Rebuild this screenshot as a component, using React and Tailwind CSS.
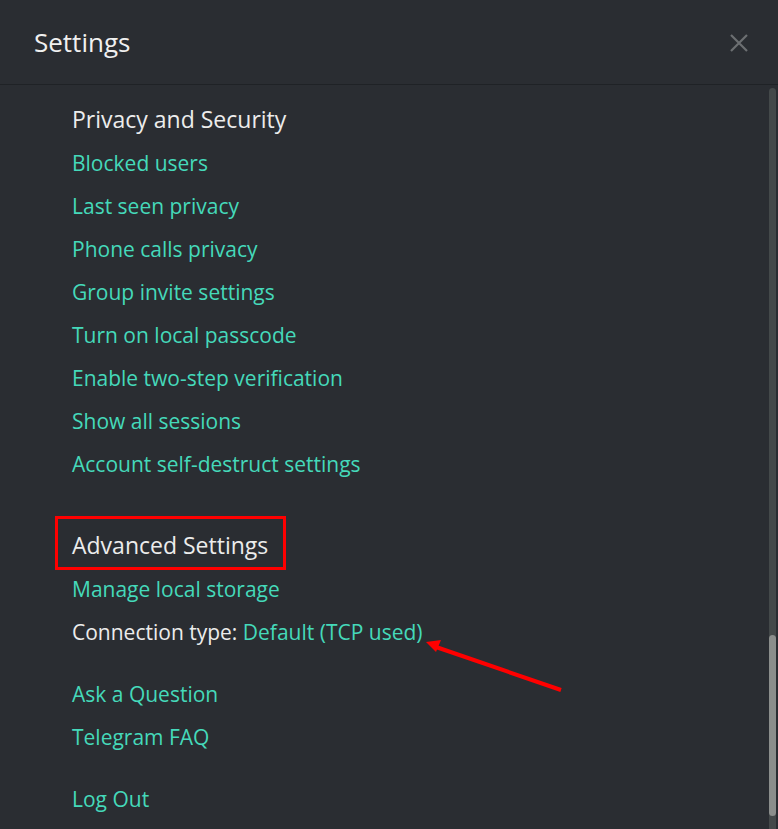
import React from "react";

const links1 = [
  "Blocked users",
  "Last seen privacy",
  "Phone calls privacy",
  "Group invite settings",
  "Turn on local passcode",
  "Enable two-step verification",
  "Show all sessions",
  "Account self-destruct settings",
];

function Link({ children }) {
  return (
    <div className="h-[43px] pt-[2px] flex items-center text-[21px] text-[#45d9ba] whitespace-nowrap">
      {children}
    </div>
  );
}

export default function App() {
  return (
    <div
      className="relative w-[778px] h-[829px] overflow-hidden bg-[#2a2d32] flex flex-col"
      style={{ fontFamily: '"Open Sans", "Noto Sans", sans-serif' }}
    >
      <div className="h-[85px] shrink-0 flex items-center justify-between pl-[34px] pr-[30px] border-b border-[#1f2226]">
        <div className="text-[26px] text-[#f0f0f0]">Settings</div>
        <svg width="18" height="18" viewBox="0 0 18 18" className="mt-[1px]">
          <path d="M1 1 L17 17 M17 1 L1 17" stroke="#6c6f72" strokeWidth="2.2" />
        </svg>
      </div>
      <div className="flex-1 flex flex-row min-h-0">
        <div className="flex-1 pl-[72px] pt-[12px]">
          <div className="h-[44px] flex items-center text-[23px] text-[#ececec] whitespace-nowrap">
            Privacy and Security
          </div>
          {links1.map((l) => (
            <Link key={l}>{l}</Link>
          ))}
          <div className="relative mt-[38px] h-[44px] flex items-center text-[23px] text-[#ececec] whitespace-nowrap">
            Advanced Settings
            <div className="absolute left-[-17px] top-[-7px] w-[231px] h-[54px] border-[3px] border-[#ff0000]" />
          </div>
          <Link>Manage local storage</Link>
          <div className="h-[43px] pt-[2px] flex items-center text-[21px] text-[#ececec] whitespace-nowrap">
            Connection type:&nbsp;<span className="text-[#45d9ba]">Default (TCP used)</span>
          </div>
          <div className="mt-[19px]">
            <Link>Ask a Question</Link>
            <Link>Telegram FAQ</Link>
          </div>
          <div className="mt-[19px]">
            <Link>Log Out</Link>
          </div>
        </div>
        <div className="w-[7px] mr-[2px] mt-[3px] rounded-t-[4px] bg-[#44494a] flex flex-col">
          <div className="h-[547px]" />
          <div className="h-[181px] rounded-[4px] bg-[#8b8e8c]" />
        </div>
      </div>
      <svg
        className="absolute left-[420px] top-[630px]"
        width="150"
        height="70"
        viewBox="420 630 150 70"
      >
        <line x1="561" y1="690" x2="436" y2="647" stroke="#ff0000" strokeWidth="4" />
        <polygon points="426,642 441,640 436,652" fill="#ff0000" />
      </svg>
    </div>
  );
}
